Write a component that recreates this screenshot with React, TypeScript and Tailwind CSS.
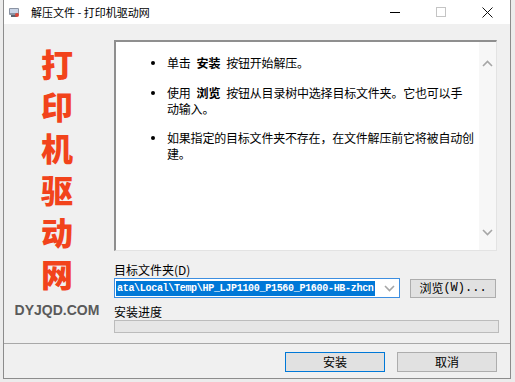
const Chevron = ({ up }: { up?: boolean }) => (
  <svg width="11" height="7" viewBox="0 0 11 7" className="block">
    <path
      d={up ? "M1 6 L5.5 1.5 L10 6" : "M1 1 L5.5 5.5 L10 1"}
      fill="none"
      stroke="#a6a6a6"
      strokeWidth="1.6"
    />
  </svg>
);

const AppIcon = () => (
  <svg width="12" height="12" viewBox="0 0 12 12" className="block">
    <rect x="1" y="2" width="10" height="7" rx="1" fill="#8a93a3" />
    <rect x="2" y="3" width="8" height="4" fill="#c9d4e6" />
    <rect x="3" y="9" width="6" height="2" fill="#5c6370" />
    <circle cx="9" cy="9" r="2" fill="#d8473a" />
  </svg>
);

const Dot = () => (
  <span className="w-[16px] h-[16px] shrink-0 flex items-center">
    <span className="w-[4px] h-[4px] rounded-full bg-black" />
  </span>
);

export default function App() {
  return (
    <div className="w-[515px] h-[382px] bg-[#ececec] overflow-hidden font-['Noto_Sans_CJK_SC',sans-serif] text-[12px] text-black">
      <div className="ml-[3px] w-[508px] h-[379px] flex flex-col border-l border-r border-b border-[#8c8c8c] bg-[#f0f0f0]">
        {/* title bar */}
        <div className="h-[24px] bg-white flex items-center shrink-0">
          <div className="pl-[4px] pr-[11px]">
            <AppIcon />
          </div>
          <span className="text-[11px] leading-[14px]">解压文件 - 打印机驱动网</span>
          <div className="ml-auto flex h-full">
            <div className="w-[46px] flex items-center justify-center">
              <div className="w-[10px] h-px bg-black" />
            </div>
            <div className="w-[46px] flex items-center justify-center">
              <div className="w-[10px] h-[10px] border border-[#c4c4c4]" />
            </div>
            <div className="w-[46px] flex items-center justify-center">
              <svg width="11" height="11" viewBox="0 0 11 11">
                <path d="M0.5 0.5 L10.5 10.5 M10.5 0.5 L0.5 10.5" stroke="#111" strokeWidth="1" />
              </svg>
            </div>
          </div>
        </div>

        {/* body */}
        <div className="flex h-[319px] shrink-0">
          <div className="w-[110px] pr-[4px] pt-[18px] flex flex-col items-center">
            {["打", "印", "机", "驱", "动", "网"].map((c) => (
              <div key={c} className="text-[32px] leading-[42px] font-black text-[#f2431b]">
                {c}
              </div>
            ))}
            <div className="mt-[8px] font-['Liberation_Sans',sans-serif] font-bold text-[14px] leading-[16px] text-[#5a5a5a]">
              DYJQD.COM
            </div>
          </div>

          <div className="flex flex-col">
            <div className="mt-[16px] w-[383px] h-[211px] flex bg-white border-t-2 border-l-2 border-t-[#8f8f8f] border-l-[#8f8f8f] border-r border-b border-r-[#e3e3e3] border-b-[#e3e3e3]">
              <div className="flex-1 pt-[13px] pl-[35px] tracking-[-0.2px] leading-[16px] whitespace-nowrap">
                <div className="flex">
                  <Dot />
                  <span>
                    单击<b className="mx-[6px]">安装</b>按钮开始解压。
                  </span>
                </div>
                <div className="flex mt-[14px]">
                  <Dot />
                  <span>
                    使用<b className="mx-[6px]">浏览</b>按钮从目录树中选择目标文件夹。它也可以手
                    <br />
                    动输入。
                  </span>
                </div>
                <div className="flex mt-[13px]">
                  <Dot />
                  <span>
                    如果指定的目标文件夹不存在，在文件解压前它将被自动创
                    <br />
                    建。
                  </span>
                </div>
              </div>
              <div className="w-[17px] bg-[#f7f7f7] flex flex-col items-center justify-between pt-[18px] pb-[14px]">
                <Chevron up />
                <Chevron />
              </div>
            </div>

            <div className="mt-[11px] leading-[16px]">目标文件夹(D)</div>
            <div className="flex items-center">
              <div className="w-[286px] h-[20px] border border-[#3d8ee0] bg-white flex items-center pl-[1px] overflow-hidden">
                <span className="bg-[#0078d7] text-white font-['Liberation_Mono',monospace] font-bold text-[10px] tracking-[-0.3px] leading-[15px] px-[1px] whitespace-nowrap">
                  ata\Local\Temp\HP_LJP1100_P1560_P1600-HB-zhcn
                </span>
                <div className="ml-auto pr-[4px] pl-[4px]">
                  <Chevron />
                </div>
              </div>
              <button className="ml-[10px] w-[86px] h-[19px] bg-[#e1e1e1] border border-[#adadad] text-[12px] leading-[14px] flex items-center justify-center">
                浏览<span className="font-['Liberation_Mono',monospace]">(W)...</span>
              </button>
            </div>
            <div className="mt-[6px] leading-[16px]">安装进度</div>
            <div className="w-[385px] h-[13px] bg-[#e6e6e6] border border-[#bcbcbc]" />
          </div>
        </div>

        <div className="h-px bg-[#a8a8a8] shrink-0" />

        <div className="flex justify-end gap-[12px] pr-[13px] pt-[8px]">
          <button className="w-[100px] h-[20px] bg-[#e1e1e1] border border-[#0078d7] leading-[14px] flex items-center justify-center">
            安装
          </button>
          <button className="w-[100px] h-[20px] bg-[#e1e1e1] border border-[#adadad] leading-[14px] flex items-center justify-center">
            取消
          </button>
        </div>
      </div>
    </div>
  );
}
